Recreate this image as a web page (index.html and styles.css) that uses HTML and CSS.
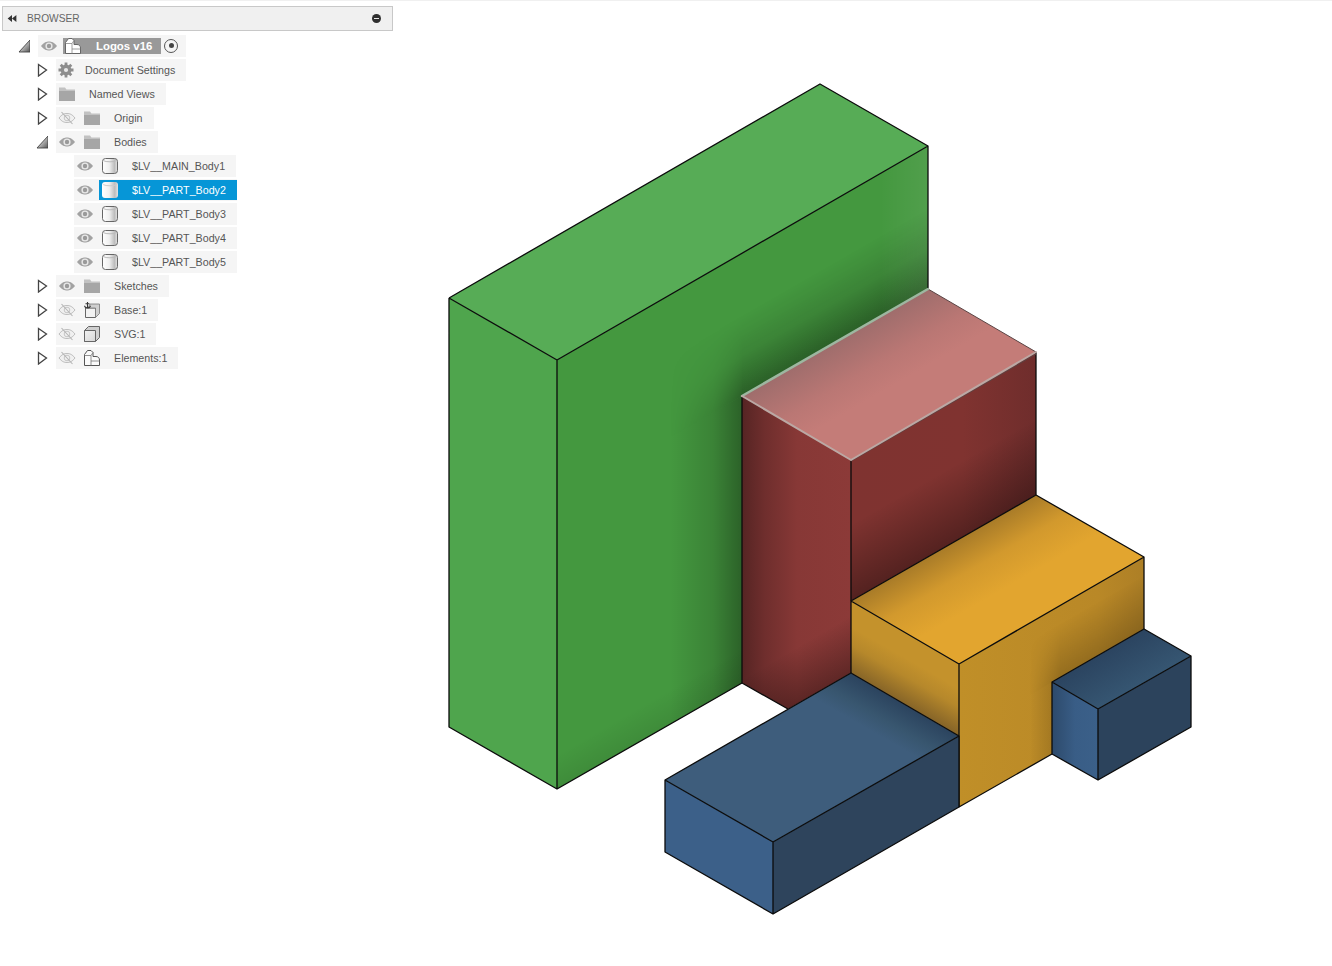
FILE: index.html
```html
<!DOCTYPE html>
<html lang="en">
<head>
<meta charset="utf-8">
<title>Browser</title>
<link rel="stylesheet" href="styles.css">
</head>
<body>
<svg class="defs" width="0" height="0" aria-hidden="true">
  <defs>
    <linearGradient id="cyl" x1="0" x2="1" y1="0" y2="0"><stop offset="0" stop-color="#fff"/><stop offset=".45" stop-color="#f0f0f0"/><stop offset=".8" stop-color="#bdbdbd"/><stop offset="1" stop-color="#e4e4e4"/></linearGradient>
    <linearGradient id="box" x1="0" x2="1" y1="0" y2="1"><stop offset="0" stop-color="#f2f2f2"/><stop offset="1" stop-color="#d6d6d6"/></linearGradient>
    <linearGradient id="twist" x1="0" x2="1" y1="0" y2="1"><stop offset=".2" stop-color="#f0f0f0"/><stop offset="1" stop-color="#555"/></linearGradient>
    <symbol id="i-eye" viewBox="0 0 18 18"><path d="M1 9C4 5.200 6.400 4.500 9 4.500S14 5.200 17 9C14 12.800 11.600 13.500 9 13.500S4 12.800 1 9Z" fill="#a2a2a2"/><circle cx="9" cy="9" r="3.600" fill="#e8e8e8"/><circle cx="9" cy="9" r="2.200" fill="#9a9a9a"/></symbol>
    <symbol id="i-eyeoff" viewBox="0 0 18 18"><path d="M1 9C4 5.200 6.400 4.500 9 4.500S14 5.200 17 9C14 12.800 11.600 13.500 9 13.500S4 12.800 1 9Z" fill="#f0f0f0" stroke="#bdbdbd"/><circle cx="9" cy="9" r="2.800" fill="none" stroke="#c6c6c6"/><path d="M3.500 3 14.500 15" stroke="#b4b4b4" stroke-width="1.100"/></symbol>
    <symbol id="i-folder" viewBox="0 0 16 16"><path d="M0 1.500H6L7.500 3.500H16V5H0Z" fill="#c2c2c2"/><path d="M0 5H16V15H0Z" fill="#a6a6a6"/></symbol>
    <symbol id="i-gear" viewBox="0 0 16 16"><g stroke="#8d8d8d" stroke-width="2.800"><path d="M8 .5V15.500M.5 8H15.500M2.700 2.700 13.300 13.300M13.300 2.700 2.700 13.300"/></g><circle cx="8" cy="8" r="5.400" fill="#8d8d8d"/><circle cx="8" cy="8" r="2.100" fill="#e8e8e8"/></symbol>
    <symbol id="i-body" viewBox="0 0 16 16"><rect x=".5" y=".5" width="15" height="15" rx="3" fill="url(#cyl)" stroke="#666"/><path d="M1.200 2.600C4 4.200 12 4.200 14.800 2.600" fill="none" stroke="#bbb"/></symbol>
    <symbol id="i-body-sel" viewBox="0 0 16 16"><rect y="0" width="16" height="16" rx="3" fill="url(#cyl)"/><path d="M1.200 2.600C4 4.200 12 4.200 14.800 2.600" fill="none" stroke="#ccc"/></symbol>
    <symbol id="i-cube" viewBox="0 0 16 16"><path d="M.5 4.500 4.500.5H15.500V11.500L11.500 15.500H.5Z" fill="#cfcfcf" stroke="#666"/><path d="M.5 4.500H11.500V15.500H.5Z" fill="url(#box)" stroke="#666"/></symbol>
    <symbol id="i-base" viewBox="0 0 16 16"><path d="M1.500 6H11.500V15.500H1.500Z" fill="#f2f2f2" stroke="#666"/><path d="M6 2H15.500V11.500L11.500 15.500V6H4Z" fill="#cfcfcf" stroke="#777" stroke-width=".8"/><path d="M3.500 0V6.500M1.500 1.800H5.500M.6 3.800C1 6.800 6 6.800 6.400 3.800" fill="none" stroke="#333" stroke-width="1.100"/></symbol>
    <symbol id="i-parts" viewBox="0 0 16 16"><path d="M.5 15.500V4.500L3.500.5H7L9 2.500V6.500H12C14.200 6.500 15.500 8 15.500 10V15.500Z" fill="#fafafa" stroke="#555"/><path d="M.5 5.500H7V15.500M7 5.500 9 2.500M7 11H15.500" fill="none" stroke="#777" stroke-width=".8"/></symbol>
    <symbol id="i-parts-w" viewBox="0 0 16 16"><path d="M.5 15.500V4.500L3.500.5H7L9 2.500V6.500H12C14.200 6.500 15.500 8 15.500 10V15.500Z" fill="#fff" stroke="#666"/><path d="M.5 5.500H7V15.500M7 5.500 9 2.500M7 11H15.500" fill="none" stroke="#888" stroke-width=".8"/></symbol>
    <symbol id="i-open" viewBox="0 0 14 14"><path d="M3 13H14V1Z" fill="url(#twist)" stroke="#444" stroke-width=".9"/></symbol>
    <symbol id="i-closed" viewBox="0 0 14 14"><path d="M4.500 1.500 12.500 7 4.500 13Z" fill="#fff" stroke="#444" stroke-width="1.300"/></symbol>
  </defs>
</svg>

<div class="page">
  <aside class="sidebar">
    <header class="panel-head">
      <svg class="rewind" viewBox="0 0 10 8"><path d="M5 0V8L0 4ZM10 0V8L5 4Z"/></svg>
      <span class="panel-title">BROWSER</span>
      <span class="collapse"></span>
    </header>
    <ul class="tree">
      <li class="row lvl0">
        <svg class="twist"><use href="#i-open"/></svg>
        <div class="pill">
          <svg class="eye"><use href="#i-eye"/></svg>
          <div class="root-node"><svg class="ic16"><use href="#i-parts-w"/></svg><span>Logos v16</span></div>
          <span class="radio"></span>
        </div>
      </li>
      <li class="row lvl1">
        <svg class="twist"><use href="#i-closed"/></svg>
        <div class="pill"><div class="node node-gear"><svg class="ic16"><use href="#i-gear"/></svg><span>Document Settings</span></div></div>
      </li>
      <li class="row lvl1">
        <svg class="twist"><use href="#i-closed"/></svg>
        <div class="pill"><div class="node node-plain"><svg class="ic16"><use href="#i-folder"/></svg><span>Named Views</span></div></div>
      </li>
      <li class="row lvl1">
        <svg class="twist"><use href="#i-closed"/></svg>
        <div class="pill"><svg class="eye"><use href="#i-eyeoff"/></svg><div class="node"><svg class="ic16"><use href="#i-folder"/></svg><span>Origin</span></div></div>
      </li>
      <li class="row lvl1">
        <svg class="twist"><use href="#i-open"/></svg>
        <div class="pill"><svg class="eye"><use href="#i-eye"/></svg><div class="node"><svg class="ic16"><use href="#i-folder"/></svg><span>Bodies</span></div></div>
      </li>
      <li class="row lvl2">
        <div class="pill"><svg class="eye"><use href="#i-eye"/></svg><div class="node"><svg class="ic16"><use href="#i-body"/></svg><span>$LV__MAIN_Body1</span></div></div>
      </li>
      <li class="row lvl2">
        <div class="pill"><svg class="eye"><use href="#i-eye"/></svg><div class="node node-sel"><svg class="ic16"><use href="#i-body-sel"/></svg><span>$LV__PART_Body2</span></div></div>
      </li>
      <li class="row lvl2">
        <div class="pill"><svg class="eye"><use href="#i-eye"/></svg><div class="node"><svg class="ic16"><use href="#i-body"/></svg><span>$LV__PART_Body3</span></div></div>
      </li>
      <li class="row lvl2">
        <div class="pill"><svg class="eye"><use href="#i-eye"/></svg><div class="node"><svg class="ic16"><use href="#i-body"/></svg><span>$LV__PART_Body4</span></div></div>
      </li>
      <li class="row lvl2">
        <div class="pill"><svg class="eye"><use href="#i-eye"/></svg><div class="node"><svg class="ic16"><use href="#i-body"/></svg><span>$LV__PART_Body5</span></div></div>
      </li>
      <li class="row lvl1">
        <svg class="twist"><use href="#i-closed"/></svg>
        <div class="pill"><svg class="eye"><use href="#i-eye"/></svg><div class="node"><svg class="ic16"><use href="#i-folder"/></svg><span>Sketches</span></div></div>
      </li>
      <li class="row lvl1">
        <svg class="twist"><use href="#i-closed"/></svg>
        <div class="pill"><svg class="eye"><use href="#i-eyeoff"/></svg><div class="node"><svg class="ic16"><use href="#i-base"/></svg><span>Base:1</span></div></div>
      </li>
      <li class="row lvl1">
        <svg class="twist"><use href="#i-closed"/></svg>
        <div class="pill"><svg class="eye"><use href="#i-eyeoff"/></svg><div class="node"><svg class="ic16"><use href="#i-cube"/></svg><span>SVG:1</span></div></div>
      </li>
      <li class="row lvl1">
        <svg class="twist"><use href="#i-closed"/></svg>
        <div class="pill"><svg class="eye"><use href="#i-eyeoff"/></svg><div class="node"><svg class="ic16"><use href="#i-parts"/></svg><span>Elements:1</span></div></div>
      </li>
    </ul>
  </aside>

  <svg class="scene" viewBox="393 1 939 966">
    <defs>
      <linearGradient id="gV" gradientUnits="userSpaceOnUse" x1="742" y1="0" x2="670" y2="0"><stop offset="0" stop-color="#000" stop-opacity=".36"/><stop offset=".4" stop-color="#000" stop-opacity=".14"/><stop offset="1" stop-color="#000" stop-opacity="0"/></linearGradient>
      <linearGradient id="gUp" gradientUnits="userSpaceOnUse" x1="835" y1="343" x2="800" y2="282"><stop offset="0" stop-color="#000" stop-opacity=".38"/><stop offset=".5" stop-color="#000" stop-opacity=".13"/><stop offset="1" stop-color="#000" stop-opacity="0"/></linearGradient>
      <linearGradient id="gSide" gradientUnits="userSpaceOnUse" x1="880" y1="0" x2="928" y2="0"><stop offset="0" stop-color="#fff" stop-opacity="0"/><stop offset="1" stop-color="#fff" stop-opacity=".07"/></linearGradient>
      <linearGradient id="gBot" gradientUnits="userSpaceOnUse" x1="640" y1="741" x2="625" y2="715"><stop offset="0" stop-color="#000" stop-opacity=".08"/><stop offset="1" stop-color="#000" stop-opacity="0"/></linearGradient>
      <linearGradient id="fadeG" gradientUnits="userSpaceOnUse" x1="670" y1="0" x2="742" y2="0"><stop offset="0" stop-color="#fff" stop-opacity="0"/><stop offset=".6" stop-color="#fff" stop-opacity=".37"/><stop offset="1" stop-color="#fff" stop-opacity=".95"/></linearGradient>
      <mask id="maskG" maskUnits="userSpaceOnUse" x="393" y="0" width="939" height="966"><rect x="393" y="0" width="939" height="966" fill="url(#fadeG)"/></mask>

      <linearGradient id="rL" gradientUnits="userSpaceOnUse" x1="743" y1="0" x2="851" y2="0"><stop offset="0" stop-color="#572524"/><stop offset=".2" stop-color="#6f2e2d"/><stop offset=".5" stop-color="#873836"/><stop offset="1" stop-color="#8c3a38"/></linearGradient>
      <linearGradient id="rLbot" gradientUnits="userSpaceOnUse" x1="820" y1="691" x2="795" y2="648"><stop offset="0" stop-color="#000" stop-opacity=".32"/><stop offset="1" stop-color="#000" stop-opacity="0"/></linearGradient>
      <linearGradient id="rR" gradientUnits="userSpaceOnUse" x1="851" y1="0" x2="1037" y2="0"><stop offset="0" stop-color="#7f3330"/><stop offset=".6" stop-color="#803330"/><stop offset="1" stop-color="#6f2d2c"/></linearGradient>
      <linearGradient id="rRbot" gradientUnits="userSpaceOnUse" x1="943" y1="548" x2="910" y2="490"><stop offset="0" stop-color="#000" stop-opacity=".34"/><stop offset="1" stop-color="#000" stop-opacity="0"/></linearGradient>
      <linearGradient id="rT" gradientUnits="userSpaceOnUse" x1="835" y1="343" x2="868" y2="400"><stop offset="0" stop-color="#9f6d6c"/><stop offset=".6" stop-color="#ba7774"/><stop offset="1" stop-color="#c47c78"/></linearGradient>

      <linearGradient id="yT" gradientUnits="userSpaceOnUse" x1="943" y1="548" x2="976" y2="605"><stop offset="0" stop-color="#a87b28"/><stop offset=".5" stop-color="#d2992d"/><stop offset="1" stop-color="#e2a52f"/></linearGradient>
      <linearGradient id="yL" gradientUnits="userSpaceOnUse" x1="905" y1="704" x2="925" y2="669"><stop offset="0" stop-color="#876528"/><stop offset=".6" stop-color="#b6882b"/><stop offset="1" stop-color="#c4922c"/></linearGradient>
      <linearGradient id="yR" gradientUnits="userSpaceOnUse" x1="959" y1="0" x2="1144" y2="0"><stop offset="0" stop-color="#c08f28"/><stop offset=".75" stop-color="#b98827"/><stop offset="1" stop-color="#ad7f26"/></linearGradient>
      <linearGradient id="ySh" gradientUnits="userSpaceOnUse" x1="1098" y1="655" x2="1075" y2="615"><stop offset="0" stop-color="#000" stop-opacity=".2"/><stop offset="1" stop-color="#000" stop-opacity="0"/></linearGradient>
      <linearGradient id="ySh2" gradientUnits="userSpaceOnUse" x1="1052" y1="0" x2="1030" y2="0"><stop offset="0" stop-color="#000" stop-opacity=".13"/><stop offset="1" stop-color="#000" stop-opacity="0"/></linearGradient>
      <linearGradient id="fadeY" gradientUnits="userSpaceOnUse" x1="1030" y1="0" x2="1060" y2="0"><stop offset="0" stop-color="#fff" stop-opacity="0"/><stop offset="1" stop-color="#fff" stop-opacity="1"/></linearGradient>
      <mask id="maskY" maskUnits="userSpaceOnUse" x="393" y="0" width="939" height="966"><rect x="393" y="0" width="939" height="966" fill="url(#fadeY)"/></mask>

      <linearGradient id="bT" gradientUnits="userSpaceOnUse" x1="905" y1="704" x2="885" y2="739"><stop offset="0" stop-color="#2b435e"/><stop offset=".6" stop-color="#38566f"/><stop offset="1" stop-color="#3e5d7c"/></linearGradient>
      <linearGradient id="sT" gradientUnits="userSpaceOnUse" x1="1098" y1="655" x2="1122" y2="696"><stop offset="0" stop-color="#2b4460"/><stop offset="1" stop-color="#365672"/></linearGradient>
      <linearGradient id="sL" gradientUnits="userSpaceOnUse" x1="1052" y1="0" x2="1098" y2="0"><stop offset="0" stop-color="#2d4a6b"/><stop offset=".5" stop-color="#395d86"/><stop offset="1" stop-color="#3b6089"/></linearGradient>
    </defs>

    <g class="solid">
      <polygon points="449,298 820,84 928,146 557,360" fill="#57ac56"/>
      <polygon points="449,298 557,360 557,789 449,727" fill="#4fa54d"/>
      <polygon points="557,360 928,146 928,289 742,396 742,683 557,789" fill="#44983f"/>
      <polygon points="670,437 742,396 742,683 670,725" fill="url(#gV)"/>
      <polygon points="670,291 742,250 928,146 928,289 742,396 670,437" fill="url(#gUp)" mask="url(#maskG)"/>
      <polygon points="742,250 928,146 928,289 742,396" fill="url(#gUp)" opacity=".05"/>
      <polygon points="880,174 928,146 928,289 880,317" fill="url(#gSide)"/>
      <polygon points="557,500 742,500 742,683 557,789" fill="url(#gBot)"/>
      <path class="edge" d="M449 298 820 84 928 146 928 289M449 298 557 360 928 146M449 298V727L557 789 742 683M557 360V789"/>
    </g>

    <g class="solid">
      <polygon points="742,396 851,460 851,673 788,709 742,683" fill="url(#rL)"/>
      <polygon points="742,396 851,460 851,673 788,709 742,683" fill="url(#rLbot)"/>
      <polygon points="851,460 1036,352 1036,495 851,601" fill="url(#rR)"/>
      <polygon points="851,460 1036,352 1036,495 851,601" fill="url(#rRbot)"/>
      <polygon points="928,289 1036,352 851,460 742,396" fill="url(#rT)"/>
      <path class="edge" d="M742 396V683L788 709M851 460V601M1036 352V495"/>
      <path class="sel-dark" d="M1036 354 851 461M928 289 1036 352"/>
      <path class="sel-green" d="M742 396 928 289"/>
      <path class="sel-pale" d="M742 396 851 460M851 460 1036 352"/>
    </g>

    <g class="solid">
      <polygon points="1036,495 1144,557 959,664 851,601" fill="url(#yT)"/>
      <polygon points="851,601 959,664 959,736 851,673" fill="url(#yL)"/>
      <polygon points="959,664 1144,557 1144,629 1052,682 1052,754 959,807" fill="url(#yR)"/>
      <polygon points="1030,623 1144,557 1144,629 1052,682 1030,695" fill="url(#ySh)" mask="url(#maskY)"/>
      <polygon points="1030,695 1052,682 1052,754 1030,767" fill="url(#ySh2)"/>
      <path class="edge" d="M1036 495 1144 557 959 664 851 601 1036 495M851 601V673M959 664V807M1144 557V629M959 807 1052 754"/>
    </g>

    <g class="solid">
      <polygon points="851,673 959,736 773,842 665,780" fill="url(#bT)"/>
      <polygon points="665,780 773,842 773,914 665,852" fill="#3c6089"/>
      <polygon points="773,842 959,736 959,807 773,914" fill="#2e445c"/>
      <path class="edge" d="M851 673 959 736 773 842 665 780ZM665 780V852L773 914V842M773 914 959 807V736"/>
    </g>

    <g class="solid">
      <polygon points="1144,629 1191,656 1098,709 1052,682" fill="url(#sT)"/>
      <polygon points="1052,682 1098,709 1098,780 1052,754" fill="url(#sL)"/>
      <polygon points="1098,709 1191,656 1191,727 1098,780" fill="#2c435c"/>
      <path class="edge" d="M1144 629 1191 656 1098 709 1052 682ZM1052 682V754L1098 780V709M1098 780 1191 727V656"/>
    </g>
  </svg>
</div>
</body>
</html>
```

FILE: styles.css
```css
* {
  box-sizing: border-box;
}

html,
body {
  margin: 0;
  height: 100%;
  background: #fff;
  overflow: hidden;
}

body {
  border-top: 1px solid #f0f0f0;
  font-family: "Liberation Sans", Arial, sans-serif;
  font-size: 10.7px;
  color: #555;
}

.defs {
  display: block;
  height: 0;
}

.page {
  display: flex;
  height: 965px;
}

.sidebar {
  flex: 0 0 393px;
  padding: 5px 0 0 2px;
}

.panel-head {
  display: flex;
  align-items: center;
  height: 25px;
  padding: 0 11px 1px 4px;
  background: #f0f0f0;
  border: 1px solid #c8c8c8;
  color: #666;
}

.rewind {
  width: 10px;
  height: 7px;
  margin-right: 10px;
  fill: #333;
}

.panel-title {
  flex: 1;
  font-size: 10.2px;
}

.collapse {
  position: relative;
  width: 9px;
  height: 9px;
  border-radius: 50%;
  background: #2f2f2f;
}

.collapse::after {
  content: "";
  position: absolute;
  left: 2px;
  right: 2px;
  top: 4px;
  height: 1px;
  background: #e8e8e8;
}

.tree {
  list-style: none;
  margin: 4px 0 0;
  padding: 0;
}

.row {
  display: flex;
  align-items: center;
  height: 22px;
  margin-bottom: 2px;
}

.lvl0 {
  padding-left: 14px;
}

.lvl1 {
  padding-left: 32px;
}

.lvl2 {
  padding-left: 72px;
}

.twist {
  flex: 0 0 14px;
  width: 14px;
  height: 14px;
  margin-right: 8px;
}

.pill {
  display: flex;
  align-items: center;
  height: 22px;
  padding-left: 2px;
  background: #f5f5f5;
}

.eye {
  flex: 0 0 18px;
  width: 18px;
  height: 18px;
}

.node {
  display: flex;
  align-items: center;
  gap: 14px;
  height: 20px;
  margin-left: 5px;
  padding: 0 11px 0 3px;
}

.node-plain {
  margin-left: 0;
  padding-left: 1px;
}

.node-gear {
  margin-left: 0;
  padding-left: 0;
  gap: 11px;
}

.node-sel {
  background: #0696d7;
  color: #fff;
}

.ic16 {
  flex: 0 0 16px;
  width: 16px;
  height: 16px;
}

.root-node {
  display: flex;
  align-items: center;
  gap: 15px;
  height: 16px;
  margin-left: 5px;
  padding: 0 9px 0 2px;
  background: #999;
  color: #fff;
  font-size: 11.4px;
  font-weight: bold;
}

.radio {
  position: relative;
  width: 14px;
  height: 14px;
  margin: 0 8px 0 3px;
  border: 1.2px solid #555;
  border-radius: 50%;
  background: #f5f5f5;
}

.radio::after {
  content: "";
  position: absolute;
  left: 3.300px;
  top: 3.300px;
  width: 5px;
  height: 5px;
  border-radius: 50%;
  background: #444;
}

.scene {
  flex: 1;
  height: 966px;
}

.edge {
  fill: none;
  stroke: #0b0b0b;
  stroke-width: 1.3;
  stroke-linejoin: round;
}

.sel-dark {
  fill: none;
  stroke: #5a4444;
  stroke-width: 1;
}

.sel-green {
  fill: none;
  stroke: #9db7a0;
  stroke-width: 2.500;
  stroke-linecap: round;
}

.sel-pale {
  fill: none;
  stroke: #bba8a4;
  stroke-width: 2;
  stroke-linecap: round;
}
```
